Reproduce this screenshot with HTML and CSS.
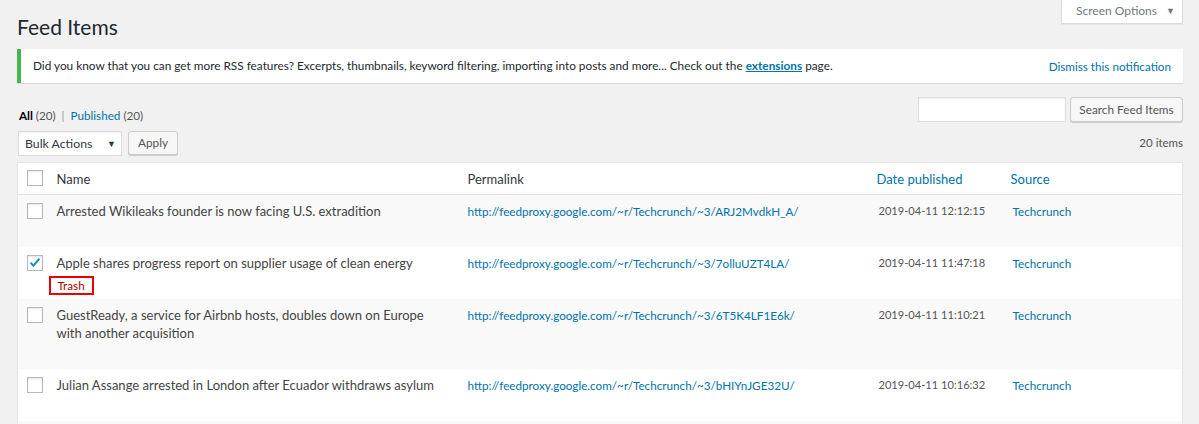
FILE: index.html
```html
<!DOCTYPE html>
<html>
<head>
<meta charset="utf-8">
<link rel="stylesheet" href="styles.css">
</head>
<body>
<div class="wrap">
  <div class="screen-meta">
    <button class="screen-options">Screen Options <span class="tri">&#9660;</span></button>
  </div>
  <h1 class="page-title">Feed Items</h1>
  <div class="notice">
    <p>Did you know that you can get more RSS features? Excerpts, thumbnails, keyword filtering, importing into posts and more... Check out the <a class="strong-link" href="#">extensions</a> page.</p>
    <a class="dismiss" href="#">Dismiss this notification</a>
  </div>

  <div class="filters">
    <div class="left-controls">
      <ul class="subsubsub">
        <li class="current">All <span class="count">(20)</span></li>
        <li class="sep">|</li>
        <li><a href="#">Published <span class="count">(20)</span></a></li>
      </ul>
      <div class="bulk">
        <div class="select">Bulk Actions <span class="sel-tri">&#9660;</span></div>
        <button class="btn">Apply</button>
      </div>
    </div>
    <div class="right-controls">
      <div class="search">
        <input class="search-input" type="text">
        <button class="btn btn-search">Search Feed Items</button>
      </div>
      <div class="items-count">20 items</div>
    </div>
  </div>

  <table class="list">
    <colgroup>
      <col class="c-check">
      <col class="c-name">
      <col class="c-perm">
      <col class="c-date">
      <col class="c-src">
    </colgroup>
    <thead>
      <tr>
        <th class="cb"><span class="checkbox"></span></th>
        <th>Name</th>
        <th>Permalink</th>
        <th class="sortable"><a href="#">Date published</a></th>
        <th class="sortable src-h"><a href="#">Source</a></th>
      </tr>
    </thead>
    <tbody>
      <tr class="alt">
        <td class="cb"><span class="checkbox"></span></td>
        <td class="title"><div class="t">Arrested Wikileaks founder is now facing U.S. extradition</div><div class="row-actions"></div></td>
        <td class="perm"><a href="#">http://feedproxy.google.com/~r/Techcrunch/~3/ARJ2MvdkH_A/</a></td>
        <td class="date">2019-04-11 12:12:15</td>
        <td class="src"><a href="#">Techcrunch</a></td>
      </tr>
      <tr>
        <td class="cb"><span class="checkbox checked"><svg viewBox="0 0 16 16" width="16" height="16"><path d="M3.6 7.6 L6.4 10.6 L12.4 3.6" fill="none" stroke="#1e8cbe" stroke-width="2.1"/></svg></span></td>
        <td class="title"><div class="t">Apple shares progress report on supplier usage of clean energy</div><div class="row-actions"><span class="trash-box"><a class="trash" href="#">Trash</a></span></div></td>
        <td class="perm"><a href="#">http://feedproxy.google.com/~r/Techcrunch/~3/7olluUZT4LA/</a></td>
        <td class="date">2019-04-11 11:47:18</td>
        <td class="src"><a href="#">Techcrunch</a></td>
      </tr>
      <tr class="alt">
        <td class="cb"><span class="checkbox"></span></td>
        <td class="title"><div class="t">GuestReady, a service for Airbnb hosts, doubles down on Europe<br>with another acquisition</div><div class="row-actions"></div></td>
        <td class="perm"><a href="#">http://feedproxy.google.com/~r/Techcrunch/~3/6T5K4LF1E6k/</a></td>
        <td class="date">2019-04-11 11:10:21</td>
        <td class="src"><a href="#">Techcrunch</a></td>
      </tr>
      <tr>
        <td class="cb"><span class="checkbox"></span></td>
        <td class="title"><div class="t">Julian Assange arrested in London after Ecuador withdraws asylum</div><div class="row-actions"></div></td>
        <td class="perm"><a href="#">http://feedproxy.google.com/~r/Techcrunch/~3/bHIYnJGE32U/</a></td>
        <td class="date">2019-04-11 10:16:32</td>
        <td class="src"><a href="#">Techcrunch</a></td>
      </tr>
      <tr class="alt">
        <td class="cb"><span class="checkbox"></span></td>
        <td class="title"><div class="t">&nbsp;</div><div class="row-actions"></div></td>
        <td></td>
        <td class="date"></td>
        <td class="src"></td>
      </tr>
    </tbody>
  </table>
</div>
</body>
</html>
```

FILE: styles.css
```css
html, body {
  margin: 0;
  padding: 0;
  background: #f1f1f1;
  overflow: hidden;
}
body {
  font-family: Lato, "Open Sans", sans-serif;
  font-size: 11.7px;
  color: #444;
  line-height: 18px;
}
a { color: #0073aa; text-decoration: none; }

.wrap {
  padding: 0 16px 0 17px;
  position: relative;
}

.screen-meta {
  display: flex;
  justify-content: flex-end;
  height: 0;
}
.screen-options {
  font-family: inherit;
  font-size: 12px;
  color: #72777c;
  background: #fff;
  border: 1px solid #ddd;
  border-top: none;
  box-shadow: 0 1px 1px rgba(0,0,0,.04);
  width: 122px;
  height: 24px;
  padding: 0 0 2px 14px;
  margin: 0;
  position: relative;
  z-index: 2;
  white-space: nowrap;
  text-align: left;
}
.screen-options .tri {
  font-size: 9px;
  margin-left: 6px;
  position: relative;
  top: -1px;
}

.page-title {
  font-size: 21px;
  font-weight: 400;
  color: #23282d;
  margin: 0;
  padding: 12px 0 7px 0;
  line-height: 30px;
}

.notice {
  background: #fff;
  border-left: 4px solid #46b450;
  box-shadow: 0 1px 1px rgba(0,0,0,.1);
  display: flex;
  justify-content: space-between;
  align-items: center;
  height: 34px;
  padding: 0 12px 0 12px;
}
.notice p {
  margin: 0;
  color: #23282d;
  font-size: 11.8px;
}
.strong-link {
  font-weight: 700;
  text-decoration: underline;
}
.dismiss { color: #0073aa; }

.filters {
  display: flex;
  justify-content: space-between;
  margin-top: 14px;
}
.left-controls { padding-top: 9px; }
.subsubsub {
  list-style: none;
  display: flex;
  margin: 0 0 0 2px;
  padding: 0;
  line-height: 18px;
  height: 19px;
  color: #666;
}
.subsubsub li { margin-right: 6px; }
.subsubsub .current { color: #000; font-weight: 700; }
.subsubsub .current .count { font-weight: 400; color: #555; }
.subsubsub .count { color: #555; }
.subsubsub .sep { color: #999; }

.bulk {
  display: flex;
  gap: 6px;
  margin-top: 6px;
  margin-left: 1px;
}
.select {
  width: 104px;
  height: 25px;
  box-sizing: border-box;
  background: #fff;
  border: 1px solid #ddd;
  box-shadow: inset 0 1px 2px rgba(0,0,0,.07);
  color: #32373c;
  font-size: 12.3px;
  padding: 0 0 0 6px;
  line-height: 24px;
  position: relative;
  white-space: nowrap;
}
.sel-tri {
  position: absolute;
  right: 5px;
  top: 0;
  font-size: 9px;
  color: #32373c;
}
.btn {
  font-family: inherit;
  font-size: 11.8px;
  color: #555;
  background: #f7f7f7;
  border: 1px solid #ccc;
  border-radius: 3px;
  box-shadow: 0 1px 0 #ccc;
  height: 24px;
  padding: 0 9px 1px;
  margin: 0;
  line-height: 22px;
  white-space: nowrap;
}

.right-controls {
  display: flex;
  flex-direction: column;
  align-items: flex-end;
}
.search {
  display: flex;
  gap: 4px;
}
.search-input {
  width: 148px;
  height: 25px;
  box-sizing: border-box;
  border: 1px solid #ddd;
  box-shadow: inset 0 1px 2px rgba(0,0,0,.07);
  margin: 0;
  padding: 0;
}
.btn-search {
  width: 113px;
  height: 25px;
  padding: 0;
}
.items-count {
  color: #555;
  margin-top: 12px;
  line-height: 18px;
  font-size: 11.5px;
}

.list {
  margin-top: 6px;
  width: 100%;
  border-collapse: collapse;
  table-layout: fixed;
  background: #fff;
  border: 1px solid #e5e5e5;
  box-shadow: 0 1px 1px rgba(0,0,0,.04);
}
.c-check { width: 29px; }
.c-name { width: 411px; }
.c-perm { width: 409px; }
.c-date { width: 135px; }
.c-src { width: auto; }

.list th {
  text-align: left;
  font-weight: 400;
  font-size: 13px;
  color: #32373c;
  padding: 7px 10px 6px;
  line-height: 18px;
  height: 18px;
  border-bottom: 1px solid #e1e1e1;
}
.list th.src-h { padding-left: 9px; }
.list th.cb, .list td.cb {
  padding: 0 0 0 9px;
  vertical-align: top;
}
.list th.cb .checkbox { margin-top: 7px; }
.list td.cb .checkbox { margin-top: 8px; }

.list td {
  vertical-align: top;
  padding: 7px 10px 5px;
  line-height: 18px;
  color: #555;
}
.list td.perm { font-size: 11.7px; }
.list td.date {
  white-space: nowrap;
  padding-left: 12px;
  font-size: 11.1px;
}
.list td.src {
  white-space: nowrap;
  padding-left: 11px;
  font-size: 11.7px;
}
.list tr.alt td { background: #f9f9f9; }
.title .t {
  color: #444;
  font-size: 13px;
  white-space: nowrap;
}
.row-actions {
  padding-top: 4px;
  height: 18px;
}
.trash-box {
  display: inline-block;
  border: 2px solid #e00;
  margin-left: -8px;
  padding: 0 6px 0 7px;
  height: 15px;
  line-height: 15px;
  width: 28px;
  font-size: 11.7px;
}
.trash { color: #a00; }

.checkbox {
  display: block;
  width: 16px;
  height: 16px;
  box-sizing: border-box;
  border: 1px solid #b4b9be;
  background: #fff;
  box-shadow: inset 0 1px 2px rgba(0,0,0,.1);
  position: relative;
}
.checkbox svg {
  position: absolute;
  left: -1px;
  top: -1px;
}
```
